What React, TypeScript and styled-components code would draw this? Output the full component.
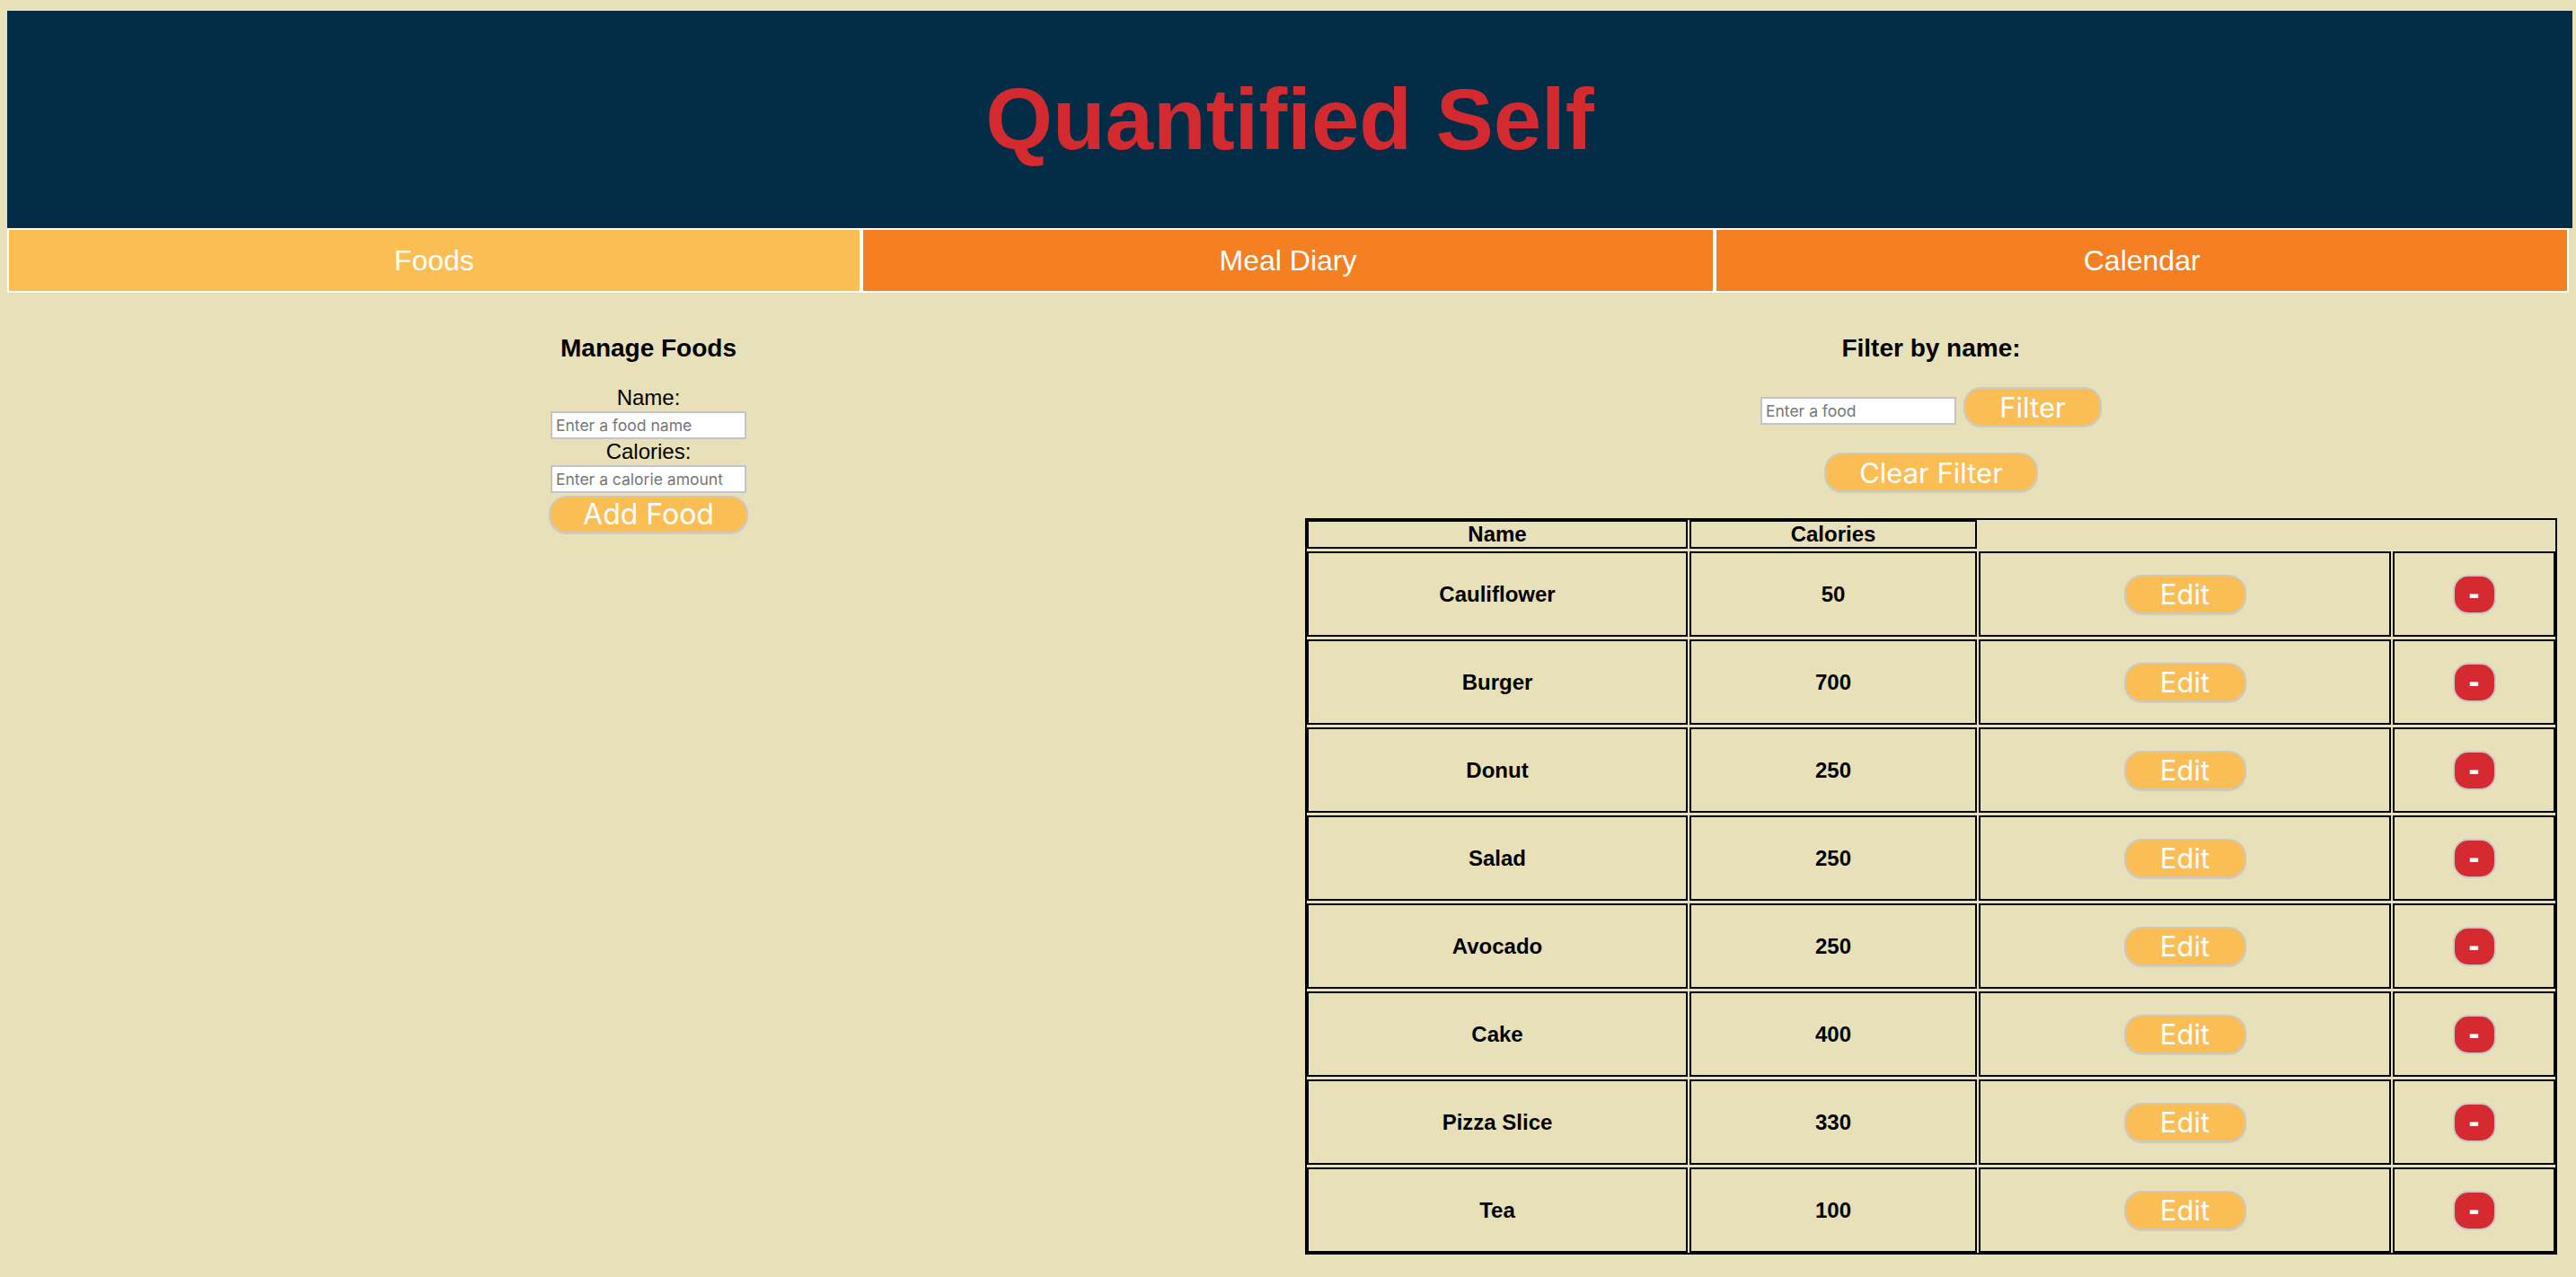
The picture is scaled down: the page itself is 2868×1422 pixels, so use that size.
import React from "react";
import styled, { createGlobalStyle } from "styled-components";

const GlobalStyle = createGlobalStyle`
  html, body {
    margin: 0;
    padding: 0;
    background: #e8e0b8;
  }
  body {
    font-family: "Liberation Sans", Arial, sans-serif;
    color: #000;
  }
  * { box-sizing: border-box; }
`;

const Page = styled.div`
  padding: 12px 4px 0 8px;
  min-height: 1422px;
`;

const Header = styled.header`
  height: 242px;
  background: #032d47;
  display: flex;
  align-items: center;
  justify-content: center;
`;

const Title = styled.h1`
  margin: 0;
  font-family: "Liberation Sans", Arial, sans-serif;
  font-weight: 700;
  font-size: 96px;
  line-height: 110px;
  color: #d32a2f;
`;

const Nav = styled.nav`
  display: grid;
  grid-template-columns: repeat(3, 1fr);
  margin-right: 4px;
`;

const Tab = styled.div<{ $active?: boolean }>`
  height: 72px;
  border: 2px solid #ffffff;
  background: ${(p) => (p.$active ? "#fbbe55" : "#f58023")};
  color: #ffffff;
  font-size: 32px;
  display: flex;
  align-items: center;
  justify-content: center;
`;

const Main = styled.main`
  display: grid;
  grid-template-columns: 1fr 1fr;
`;

const Column = styled.section`
  display: flex;
  flex-direction: column;
  align-items: center;
  padding-top: 46px;
`;

const Heading = styled.h3`
  margin: 0;
  font-size: 28px;
  line-height: 32px;
  font-weight: 700;
`;

const Form = styled.div`
  display: flex;
  flex-direction: column;
  align-items: center;
  margin-top: 25px;
`;

const Label = styled.label`
  font-size: 24px;
  line-height: 28px;
  margin-bottom: 1px;
`;

const Input = styled.input`
  width: 218px;
  height: 31px;
  border: 2px solid #c4c4c4;
  background: #ffffff;
  padding: 0 4px;
  font-family: Inter, "Open Sans", sans-serif;
  font-size: 17.5px;
  outline: none;
  &::placeholder {
    color: #767676;
  }
`;

const Pill = styled.button<{ $width: number; $size?: number }>`
  width: ${(p) => p.$width}px;
  height: 44px;
  border: 2px solid #ccc9c0;
  border-radius: 20px;
  background: #fbbe55;
  color: #ffffff;
  font-family: Inter, "Open Sans", sans-serif;
  font-size: ${(p) => p.$size ?? 31}px;
  line-height: 1;
  padding: 0;
  cursor: pointer;
  box-shadow: 0 1px 0 rgba(0, 0, 0, 0.08);
`;

const DeleteButton = styled.button`
  width: 48px;
  height: 44px;
  border: 2px solid #cbc8c8;
  border-radius: 17px;
  background: #d52b30;
  color: #ffffff;
  font-family: "Liberation Sans", Arial, sans-serif;
  font-weight: 700;
  font-size: 36px;
  line-height: 1;
  padding: 0 0 2px;
  cursor: pointer;
`;

const FilterRow = styled.div`
  display: flex;
  align-items: flex-start;
  gap: 8px;
  margin-top: 27px;
  & > input {
    margin-top: 11px;
  }
`;

const ClearRow = styled.div`
  margin-top: 29px;
`;

const TableFrame = styled.div`
  margin-top: 29px;
  width: 1394px;
  border: 2px solid #000;
`;

const Table = styled.table`
  width: calc(100% + 4px);
  margin: -3px -2px;
  border-collapse: separate;
  border-spacing: 2px 3px;
`;

const HeadCell = styled.th<{ $width?: number; $bare?: boolean }>`
  ${(p) => (p.$width ? `width: ${p.$width}px;` : "")}
  height: 31px;
  border: ${(p) => (p.$bare ? "none" : "2px solid #000")};
  padding: 0;
  font-size: 24px;
  font-weight: 700;
  text-align: center;
  vertical-align: middle;
`;

const Cell = styled.td<{ $width: number }>`
  width: ${(p) => p.$width}px;
  height: 95px;
  border: 2px solid #000;
  padding: 0;
  font-size: 24px;
  font-weight: 700;
  text-align: center;
  vertical-align: middle;
`;

const foods = [
  { name: "Cauliflower", calories: 50 },
  { name: "Burger", calories: 700 },
  { name: "Donut", calories: 250 },
  { name: "Salad", calories: 250 },
  { name: "Avocado", calories: 250 },
  { name: "Cake", calories: 400 },
  { name: "Pizza Slice", calories: 330 },
  { name: "Tea", calories: 100 },
];

export default function App() {
  return (
    <>
      <GlobalStyle />
      <Page>
        <Header>
          <Title>Quantified Self</Title>
        </Header>
        <Nav>
          <Tab $active>Foods</Tab>
          <Tab>Meal Diary</Tab>
          <Tab>Calendar</Tab>
        </Nav>
        <Main>
          <Column>
            <Heading>Manage Foods</Heading>
            <Form>
              <Label>Name:</Label>
              <Input placeholder="Enter a food name" />
              <Label>Calories:</Label>
              <Input placeholder="Enter a calorie amount" />
              <Pill $width={222} $size={32} style={{ height: 42, marginTop: 3 }}>
                Add Food
              </Pill>
            </Form>
          </Column>
          <Column>
            <Heading>Filter by name:</Heading>
            <FilterRow>
              <Input placeholder="Enter a food" />
              <Pill $width={154}>Filter</Pill>
            </FilterRow>
            <ClearRow>
              <Pill $width={238}>Clear Filter</Pill>
            </ClearRow>
            <TableFrame>
              <Table>
                <thead>
                  <tr>
                    <HeadCell $width={424}>Name</HeadCell>
                    <HeadCell $width={320}>Calories</HeadCell>
                    <HeadCell $bare colSpan={2} />
                  </tr>
                </thead>
                <tbody>
                  {foods.map((f) => (
                    <tr key={f.name}>
                      <Cell $width={424}>{f.name}</Cell>
                      <Cell $width={320}>{f.calories}</Cell>
                      <Cell $width={459}>
                        <Pill $width={136}>Edit</Pill>
                      </Cell>
                      <Cell $width={181}>
                        <DeleteButton>-</DeleteButton>
                      </Cell>
                    </tr>
                  ))}
                </tbody>
              </Table>
            </TableFrame>
          </Column>
        </Main>
      </Page>
    </>
  );
}
